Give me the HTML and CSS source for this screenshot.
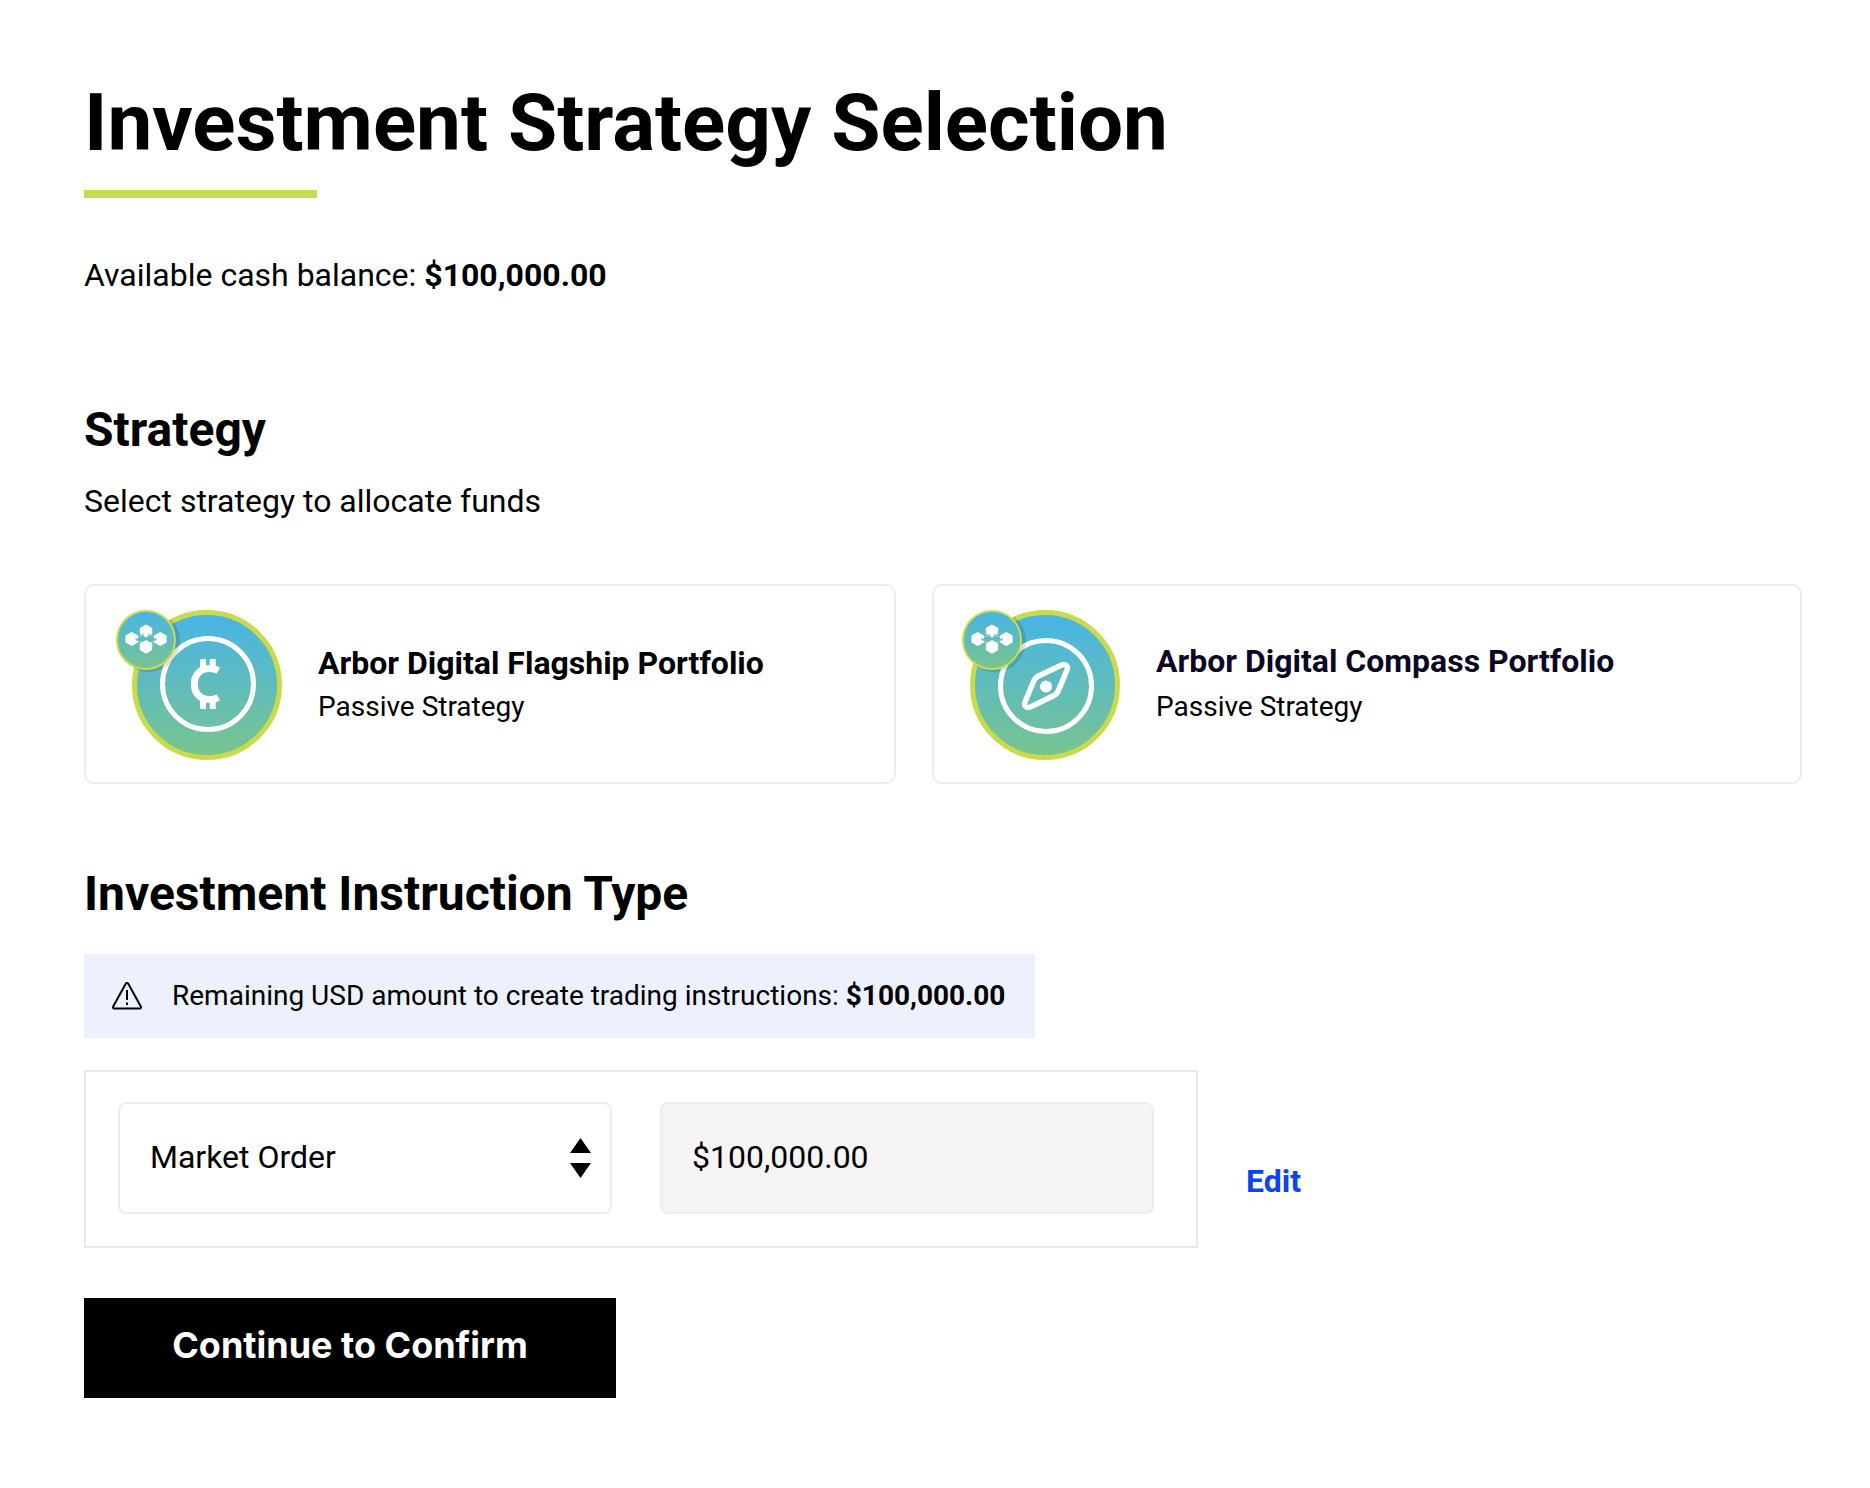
FILE: index.html
```html
<!DOCTYPE html>
<html lang="en">
<head>
<meta charset="utf-8">
<meta name="viewport" content="width=device-width, initial-scale=1">
<title>Investment Strategy Selection</title>
<link rel="stylesheet" href="styles.css">
</head>
<body>
<main class="page">
  <h1 class="page-title">Investment Strategy Selection</h1>
  <p class="balance">Available cash balance: <strong>$100,000.00</strong></p>

  <section class="strategy">
    <h2 class="section-title">Strategy</h2>
    <p class="section-hint">Select strategy to allocate funds</p>
    <div class="cards">
      <button type="button" class="card">
        <svg class="card-icon" width="168" height="152" viewBox="-2 -2 168 152" aria-hidden="true">
          <defs>
            <linearGradient id="sky" x1="0" y1="0" x2="0" y2="1">
              <stop offset="0" stop-color="#46b4e8"/>
              <stop offset="1" stop-color="#7ac48e"/>
            </linearGradient>
            <clipPath id="disc-flagship"><circle cx="91" cy="75" r="75"/></clipPath>
            <g id="badge">
              <circle cx="30" cy="30" r="29" fill="url(#sky)" stroke="#c9db4c" stroke-width="2"/>
              <path d="M16 29 30 24 44 29 30 34z" fill="none" stroke="#fff" stroke-opacity=".45"/>
              <g fill="#fff">
                <path d="M15.700 22l6.300 3.500v3.300l-3-.6 1 2.600 2 .4v1.300L15.700 36l-6.300-3.500v-7z"/>
                <path d="M30 14.500l6.200 3.500v6l-2.700.8-.8-1.600-.9 3.200L30 27.800l-1.800-1.400-.9-3.200-.8 1.600-2.700-.8v-6z"/>
                <path d="M44.300 22l-6.300 3.500v3.300l3-.6-1 2.600-2 .4v1.300l6.300 3.500 6.300-3.500v-7z"/>
                <path d="M30 30l6.200 3.500v6.500L30 43.700 23.800 40v-6.500z"/>
              </g>
            </g>
          </defs>
          <circle cx="91" cy="75" r="72.500" fill="url(#sky)" stroke="#c9db4c" stroke-width="5"/>
          <circle cx="92" cy="74" r="45.500" fill="none" stroke="#fff" stroke-width="5"/>
          <path d="M102.300 60.800C100 59.300 97 58.500 93.500 58.500 84 58.500 78.300 65 78.300 74S84 89.600 93.500 89.600c3.500 0 6.500-.8 8.800-2.200" fill="none" stroke="#fff" stroke-width="7"/>
          <path d="M84 49h6v9h-6zM93.700 49h6v8h-6zM84 90h6v9h-6zM93.700 91h6v8h-6z" fill="#fff"/>
          <circle cx="33" cy="31" r="31" fill="#000" fill-opacity=".12" clip-path="url(#disc-flagship)"/>
          <use href="#badge"/>
        </svg>
        <span class="card-text">
          <span class="card-name">Arbor Digital Flagship Portfolio</span>
          <span class="card-kind">Passive Strategy</span>
        </span>
      </button>
      <button type="button" class="card">
        <svg class="card-icon" width="158" height="152" viewBox="0 -2 158 152" aria-hidden="true">
          <defs><clipPath id="disc-compass"><circle cx="83" cy="75" r="75"/></clipPath></defs>
          <circle cx="83" cy="75" r="72.500" fill="url(#sky)" stroke="#c9db4c" stroke-width="5"/>
          <circle cx="84" cy="76" r="45.500" fill="none" stroke="#fff" stroke-width="5"/>
          <path d="M75.500 66.500 99.500 55c4-1.500 7 1 5.500 5L96 81.500c-1 2-2 3-4 4L68.500 97c-4 1.500-7-1-5.500-5l9-21.500c1-2 1.500-3 3.500-4z" fill="none" stroke="#fff" stroke-width="5.500"/>
          <circle cx="84" cy="76.500" r="6" fill="#fff"/>
          <circle cx="33" cy="31" r="31" fill="#000" fill-opacity=".12" clip-path="url(#disc-compass)"/>
          <use href="#badge"/>
        </svg>
        <span class="card-text card-text-navy">
          <span class="card-name">Arbor Digital Compass Portfolio</span>
          <span class="card-kind">Passive Strategy</span>
        </span>
      </button>
    </div>
  </section>

  <section class="instruction">
    <h2 class="section-title">Investment Instruction Type</h2>
    <p class="notice">
      <svg class="notice-icon" width="30" height="28" viewBox="0 0 30 28" fill="none" stroke="#000" stroke-width="2" stroke-linejoin="round" aria-hidden="true">
        <path d="M13.700 1.800 1.200 24.500c-.5 1 0 2 1 2h25.600c1 0 1.500-1 1-2L16.300 1.800c-.6-1-2-1-2.600 0z"/>
        <path d="M15 8v10M15 20.500v2.500"/>
      </svg>
      <span>Remaining USD amount to create trading instructions: <strong>$100,000.00</strong></span>
    </p>
    <div class="order-row">
      <div class="order">
        <div class="select-wrap">
          <select class="field" aria-label="Instruction type">
            <option>Market Order</option>
          </select>
          <svg class="select-arrows" width="21" height="40" viewBox="0 0 21 40" aria-hidden="true">
            <path d="M10.500 0 21 15H0zM0 25h21L10.500 40z"/>
          </svg>
        </div>
        <input class="field field-locked" type="text" value="$100,000.00" aria-label="Amount" readonly>
      </div>
      <a class="edit" href="#">Edit</a>
    </div>
  </section>

  <button type="submit" class="continue">Continue to Confirm</button>
</main>
</body>
</html>
```
FILE: styles.css
```css
* {
  box-sizing: border-box;
}

body {
  margin: 0;
  background: #fff;
  color: #000;
  font: 32px/40px Roboto, sans-serif;
}

h1, h2, p {
  margin: 0;
}

strong {
  font-weight: 700;
}

.page {
  padding: 75px 68px 90px 84px;
}

.page-title {
  font-size: 80px;
  line-height: 96px;
  font-weight: 700;
}

.page-title::after {
  content: "";
  display: block;
  width: 233px;
  height: 8px;
  margin-top: 19px;
  background: #c9db4c;
}

.balance {
  margin-top: 57px;
}

.section-title {
  font-size: 48px;
  line-height: 56px;
  font-weight: 700;
}

.strategy {
  margin-top: 107px;
}

.section-hint {
  margin-top: 23px;
}

.cards {
  display: grid;
  grid-template-columns: 812fr 870fr;
  gap: 36px;
  margin-top: 63px;
}

.card {
  display: flex;
  align-items: center;
  gap: 36px;
  min-height: 200px;
  padding: 0 28px;
  border: 2px solid #ededed;
  border-radius: 10px;
  background: #fff;
  color: inherit;
  font: inherit;
  text-align: left;
  cursor: pointer;
}

.card-icon {
  flex: none;
}

.card-text {
  display: flex;
  flex-direction: column;
  gap: 6px;
}

.card-text-navy {
  gap: 8px;
  padding-bottom: 2px;
}

.card-name {
  font-weight: 700;
}

.card-text-navy .card-name {
  color: #0b0824;
}

.card-kind {
  font-size: 28px;
  line-height: 36px;
}

.instruction {
  margin-top: 82px;
}

.notice {
  display: flex;
  align-items: center;
  gap: 30px;
  width: fit-content;
  min-height: 84px;
  margin-top: 32px;
  padding: 0 30px 0 28px;
  background: #edf1fe;
  font-size: 28px;
  line-height: 36px;
}

.notice-icon {
  flex: none;
}

.order-row {
  display: flex;
  align-items: center;
  gap: 48px;
  margin-top: 32px;
}

.order {
  display: grid;
  grid-template-columns: 1fr 1fr;
  gap: 48px;
  width: 100%;
  max-width: 1114px;
  padding: 30px 42px 32px 32px;
  border: 2px solid #e9e9ee;
}

.select-wrap {
  display: grid;
  align-items: center;
}

.select-wrap > * {
  grid-area: 1 / 1;
}

.field {
  width: 100%;
  height: 112px;
  padding: 0 30px 2px;
  border: 2px solid #ededed;
  border-radius: 8px;
  background: #fff;
  color: #000;
  font: inherit;
  appearance: none;
}

.field-locked {
  background: #f5f5f5;
}

.select-arrows {
  justify-self: end;
  margin-right: 21px;
  pointer-events: none;
}

.edit {
  margin-top: 44px;
  color: #0b45f0;
  font-weight: 700;
  text-decoration: none;
}

.continue {
  display: block;
  width: 532px;
  max-width: 100%;
  height: 100px;
  margin-top: 50px;
  padding: 0 0 6px;
  border: 0;
  background: #000;
  color: #fff;
  font: 700 36px/44px Inter, sans-serif;
  cursor: pointer;
}
```
